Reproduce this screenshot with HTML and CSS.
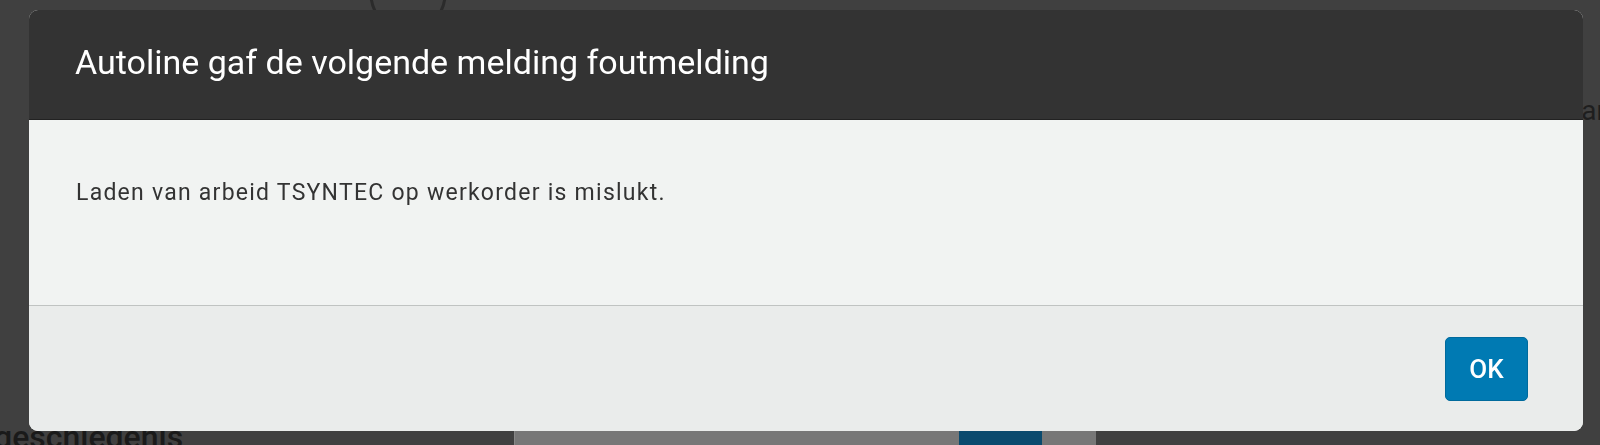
FILE: index.html
```html
<!DOCTYPE html>
<html lang="nl">
<head>
    <meta charset="UTF-8">
    <meta name="viewport" content="width=device-width, initial-scale=1.0">
    <title>Autoline melding</title>
    <link rel="stylesheet" href="styles.css">
</head>
<body>

    <div class="page">
        <div class="page-top">
            <svg class="ring" width="84" height="60" viewBox="0 0 84 60">
                <circle cx="42" cy="22" r="37" fill="none" stroke="#2b2b2b" stroke-width="3"/>
            </svg>
        </div>
        <div class="page-mid">
            <span class="side-label">ar</span>
        </div>
        <div class="page-bottom">
            <span class="history">geschiedenis</span>
            <div class="panel">
                <div class="panel-btn"></div>
            </div>
        </div>
    </div>

    <div class="modal">
        <div class="modal-header">
            <h2>Autoline gaf de volgende melding foutmelding</h2>
        </div>
        <div class="modal-body">
            <p>Laden van arbeid TSYNTEC op werkorder is mislukt.</p>
        </div>
        <div class="modal-footer">
            <button class="btn-ok">OK</button>
        </div>
    </div>

</body>
</html>
```

FILE: styles.css
```css
* {
    margin: 0;
    padding: 0;
    box-sizing: border-box;
    font-family: 'Roboto', 'Liberation Sans', sans-serif;
}

body {
    width: 1600px;
    height: 445px;
    overflow: hidden;
    background: #404040;
}

/* page behind the overlay */
.page {
    height: 445px;
    display: flex;
    flex-direction: column;
}

.page-top {
    height: 90px;
    overflow: hidden;
}

.ring {
    display: block;
    margin-left: 366px;
    margin-top: -28px;
}

.page-mid {
    height: 40px;
    display: flex;
    justify-content: flex-end;
    overflow: hidden;
}

.side-label {
    font-size: 28px;
    color: #1e1e1e;
    margin-right: -6px;
    line-height: 42px;
}

.page-bottom {
    margin-top: auto;
    height: 60px;
    display: flex;
    align-items: flex-end;
}

.history {
    width: 520px;
    margin-left: -6px;
    font-size: 32px;
    font-weight: 500;
    color: #1a1a1a;
    line-height: 1;
    margin-bottom: -8px;
}

.panel {
    width: 582px;
    height: 60px;
    background: #777777;
    border-left: 1px solid #888;
    padding-top: 42px;
    padding-left: 444px;
}

.panel-btn {
    width: 83px;
    height: 20px;
    background: #0a4a6e;
    border-radius: 4px 4px 0 0;
}

/* dialog */
.modal {
    position: fixed;
    top: 10px;
    left: 29px;
    width: 1554px;
    height: 421px;
    border-radius: 9px;
    overflow: hidden;
    display: flex;
    flex-direction: column;
    background: #f1f3f2;
}

.modal-header {
    height: 110px;
    background: #333333;
    padding: 32px 0 0 46px;
    border-bottom: 1px solid #222;
}

.modal-header h2 {
    font-size: 34px;
    font-weight: 400;
    line-height: 40px;
    color: #ffffff;
}

.modal-body {
    height: 186px;
    padding: 59px 47px 0;
    border-bottom: 1px solid #c0c3c2;
}

.modal-body p {
    font-size: 23px;
    letter-spacing: 1.25px;
    color: #333333;
}

.modal-footer {
    flex: 1;
    background: #eaeceb;
    display: flex;
    justify-content: flex-end;
    align-items: flex-start;
    padding: 31px 55px 0 0;
}

.btn-ok {
    width: 83px;
    height: 64px;
    background: #007ab3;
    border: 1px solid #006a9c;
    border-radius: 5px;
    color: white;
    font-size: 26px;
    font-weight: 500;
    cursor: pointer;
}
```
